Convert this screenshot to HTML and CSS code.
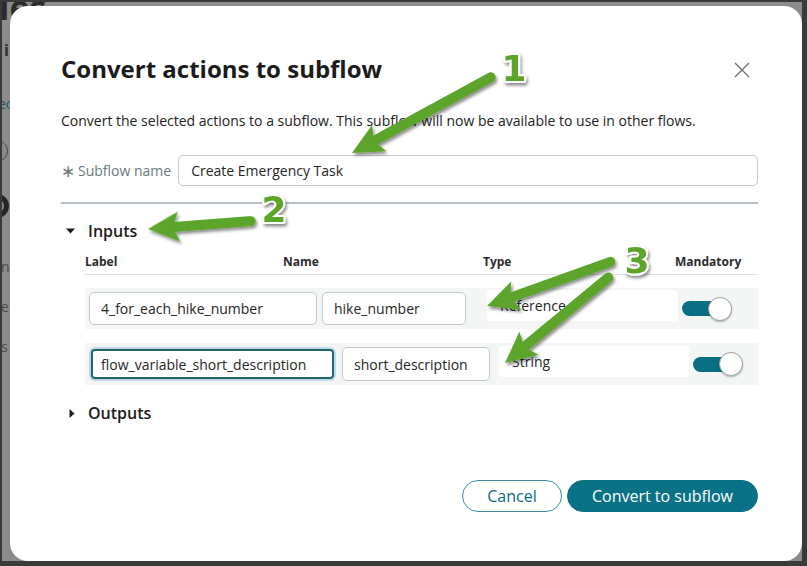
FILE: index.html
```html
<!DOCTYPE html>
<html lang="en">
<head>
<meta charset="utf-8">
<title>Convert actions to subflow</title>
<link rel="stylesheet" href="styles.css">
</head>
<body>
<div class="frame">
  <div class="bg-col">
    <span class="bg-title">les</span>
    <span class="bg-i">i</span>
    <span class="bg-ec">ec</span>
    <span class="bg-ring"></span>
    <span class="bg-ring-bold"></span>
    <span class="bg-letter bg-n">n</span>
    <span class="bg-letter">e</span>
    <span class="bg-letter">s</span>
  </div>

  <div class="modal">
    <div class="modal-head">
      <h1 class="title">Convert actions to subflow</h1>
      <button class="close" aria-label="Close">
        <svg width="16" height="16" viewBox="0 0 16 16"><path d="M1 1 L15 15 M15 1 L1 15" stroke="#707070" stroke-width="1.3" fill="none"/></svg>
      </button>
    </div>
    <p class="desc">Convert the selected actions to a subflow. This subflow will now be available to use in other flows.</p>

    <div class="name-row">
      <label class="name-label"><span class="req">∗</span> Subflow name</label>
      <div class="field name-field">Create Emergency Task</div>
    </div>
    <div class="divider"></div>

    <div class="section-head">
      <svg class="caret" width="9" height="6" viewBox="0 0 9 6"><path d="M0 0.5 H9 L4.5 5.5 Z" fill="#1c1c1c"/></svg>
      <span>Inputs</span>
    </div>

    <div class="table">
      <div class="thead">
        <span>Label</span><span>Name</span><span>Type</span><span>Mandatory</span>
      </div>
      <div class="trow trow-1">
        <div class="field f-label">4_for_each_hike_number</div>
        <div class="field f-name">hike_number</div>
        <div class="type">Reference</div>
        <div class="toggle"><span class="track"></span><span class="knob"></span></div>
      </div>
      <div class="trow trow-2">
        <div class="field f-label focused">flow_variable_short_description</div>
        <div class="field f-name">short_description</div>
        <div class="type">String</div>
        <div class="toggle"><span class="track"></span><span class="knob"></span></div>
      </div>
    </div>

    <div class="section-head outputs">
      <svg class="caret caret-right" width="6" height="9" viewBox="0 0 6 9"><path d="M0.5 0 V9 L5.5 4.5 Z" fill="#1c1c1c"/></svg>
      <span>Outputs</span>
    </div>

    <div class="footer">
      <button class="btn btn-outline">Cancel</button>
      <button class="btn btn-primary">Convert to subflow</button>
    </div>
  </div>

  <svg class="annotations" width="807" height="566" viewBox="0 0 807 566">
    <defs>
      <filter id="sh" x="-20%" y="-20%" width="140%" height="140%">
        <feDropShadow dx="1.5" dy="2.5" stdDeviation="1.6" flood-color="#000" flood-opacity="0.45"/>
      </filter>
    </defs>
    <g filter="url(#sh)" fill="#5ba42c" stroke="#5ba42c">
      <g transform="translate(352,153) rotate(151.4)">
        <line x1="-158" y1="0" x2="-22" y2="0" stroke-width="10" stroke-linecap="round"/>
        <polygon points="0,0 -31,-15 -25,0 -31,15" stroke="none"/>
      </g>
      <g transform="translate(148,229) rotate(175.6)">
        <line x1="-103" y1="0" x2="-22" y2="0" stroke-width="10" stroke-linecap="round"/>
        <polygon points="0,0 -31,-15 -25,0 -31,15" stroke="none"/>
      </g>
      <g transform="translate(487,306) rotate(160.3)">
        <line x1="-131" y1="0" x2="-22" y2="0" stroke-width="10" stroke-linecap="round"/>
        <polygon points="0,0 -31,-15 -25,0 -31,15" stroke="none"/>
      </g>
      <g transform="translate(505,363) rotate(140.4)">
        <line x1="-134" y1="0" x2="-22" y2="0" stroke-width="10" stroke-linecap="round"/>
        <polygon points="0,0 -31,-15 -25,0 -31,15" stroke="none"/>
      </g>
    </g>
    <g filter="url(#sh)" class="num">
      <text x="514" y="81">1</text>
      <text x="274" y="222">2</text>
      <text x="637" y="273">3</text>
    </g>
  </svg>
</div>
</body>
</html>
```

FILE: styles.css
```css
* { box-sizing: border-box; }

body {
  margin: 0;
  font-family: "Open Sans", "Noto Sans", sans-serif;
  color: #1f1f1f;
}

.frame {
  position: relative;
  width: 807px;
  height: 566px;
  overflow: hidden;
  background: #8b8b8b;
  border-style: solid;
  border-color: #3a3a3a;
  border-width: 2px 5px 5px 2px;
}

/* dimmed page behind the dialog */
.bg-col {
  display: flex;
  flex-direction: column;
  align-items: flex-start;
  width: 60px;
  margin-top: -12px;
  color: #2f2f2f;
}
.bg-title { font-size: 34px; font-weight: 700; line-height: 34px; margin-left: -3px; color: #2b2b2b; }
.bg-i { font-size: 16px; font-weight: 700; line-height: 20px; margin-top: 16px; margin-left: 2px; }
.bg-ec { font-size: 14px; line-height: 18px; margin-top: 35px; margin-left: -4px; color: #1e5a66; }
.bg-ring { width: 22px; height: 22px; border: 1px solid #4a4a4a; border-radius: 50%; margin-top: 27px; margin-left: -16px; }
.bg-ring-bold { width: 24px; height: 24px; border: 5px solid #262626; border-radius: 50%; margin-top: 32px; margin-left: -17px; }
.bg-letter { font-size: 14px; line-height: 18px; color: #4b4b4b; margin-top: 22px; margin-left: -1px; }
.bg-n { margin-top: 40px; }

/* dialog */
.modal {
  position: absolute;
  left: 8px;
  top: 4px;
  width: 792px;
  height: 555px;
  background: #fff;
  border-radius: 18px;
  padding: 47px 44px 0 51px;
  display: flex;
  flex-direction: column;
}

.modal-head {
  display: flex;
  align-items: center;
  justify-content: space-between;
}
.title {
  margin: 0;
  font-size: 24px;
  line-height: 32px;
  font-weight: 700;
  color: #1b1b1b;
}
.close {
  border: 0;
  background: none;
  padding: 0;
  width: 16px;
  height: 16px;
  margin-right: 8px;
  margin-top: 2px;
  display: flex;
}

.desc {
  margin: 26px 0 0;
  font-size: 14px;
  line-height: 20px;
  color: #222;
}

.name-row {
  display: flex;
  align-items: center;
  gap: 7px;
  margin-top: 24px;
}
.name-label {
  font-size: 14px;
  color: #6c7a7c;
  white-space: nowrap;
  display: flex;
  align-items: center;
  gap: 3px;
}
.req { color: #6c7a7c; font-size: 17px; line-height: 14px; }

.field {
  display: flex;
  align-items: center;
  border: 1px solid #c3caca;
  border-radius: 5px;
  background: #fff;
  font-size: 14px;
  color: #262626;
  padding-left: 11px;
  white-space: nowrap;
  overflow: hidden;
}
.name-field {
  flex: 1;
  height: 31px;
  padding-left: 12px;
}

.divider {
  height: 2px;
  background: #b7bfbf;
  margin-top: 16px;
}

.section-head {
  display: flex;
  align-items: center;
  height: 22px;
  margin-top: 16px;
  font-size: 16px;
  font-weight: 600;
  color: #1c1c1c;
}
.caret { margin-left: 5px; margin-right: 13px; }
.caret-right { margin-left: 8px; margin-right: 13px; }
.outputs { margin-top: 17px; }

.table { margin-left: 23px; margin-top: 12px; }
.thead {
  display: grid;
  grid-template-columns: 198px 200px 192px 1fr;
  padding: 0 0 4px 1px;
  font-size: 12px;
  line-height: 16px;
  font-weight: 700;
  color: #2b2b2b;
  border-bottom: 1px solid #dde2e2;
}

.trow {
  display: flex;
  align-items: center;
  margin-left: 1px;
  background: #f4f6f6;
}
.trow-1 { height: 41px; margin-top: 13px; padding-left: 4px; }
.trow-2 { height: 42px; margin-top: 14px; padding-left: 6px; }

.f-label, .f-name { height: 33px; }
.trow-1 .f-label { width: 228px; }
.trow-1 .f-name { width: 144px; margin-left: 5px; }
.trow-1 .type { width: 191px; margin-left: 21px; }
.trow-2 .f-label { width: 243px; }
.trow-2 .f-name { width: 148px; margin-left: 8px; height: 34px; }
.trow-2 .type { width: 190px; margin-left: 9px; }

.focused {
  border: 2px solid #1f6a69;
  border-radius: 4px;
  height: 30px;
  padding-left: 8px;
  box-shadow: 0 0 0 2px #c3d8ef;
}

.type {
  height: 31px;
  margin-bottom: 6px;
  background: #fff;
  border-radius: 4px;
  display: flex;
  align-items: center;
  padding-left: 13px;
  font-size: 14px;
  color: #262626;
}

.toggle {
  position: relative;
  width: 50px;
  height: 24px;
  margin-left: 4px;
  display: flex;
  align-items: center;
}
.track {
  width: 44px;
  height: 15px;
  border-radius: 8px;
  background: #0b6f83;
}
.knob {
  position: absolute;
  right: 0;
  top: 0;
  width: 24px;
  height: 24px;
  border-radius: 50%;
  background: #fff;
  border: 1px solid #9aa4a6;
  box-shadow: 0 1px 2px rgba(0,0,0,0.3);
}

.footer {
  display: flex;
  justify-content: flex-end;
  gap: 5px;
  margin-top: 56px;
}
.btn {
  height: 32px;
  border-radius: 16px;
  font-family: inherit;
  font-size: 16px;
  padding: 0;
  cursor: pointer;
}
.btn-outline {
  width: 100px;
  background: #fff;
  border: 1px solid #3a8c9c;
  color: #0c6b7d;
}
.btn-primary {
  width: 191px;
  background: #0a7286;
  border: 1px solid #0a7286;
  color: #fff;
}

/* annotation overlay */
.annotations {
  position: absolute;
  left: -2px;
  top: -2px;
  pointer-events: none;
}
.num text {
  font-family: "DejaVu Sans", sans-serif;
  font-weight: 700;
  font-size: 36px;
  fill: #5ba42c;
  stroke: #fff;
  stroke-width: 4px;
  stroke-linejoin: round;
  paint-order: stroke;
  text-anchor: middle;
}
```
